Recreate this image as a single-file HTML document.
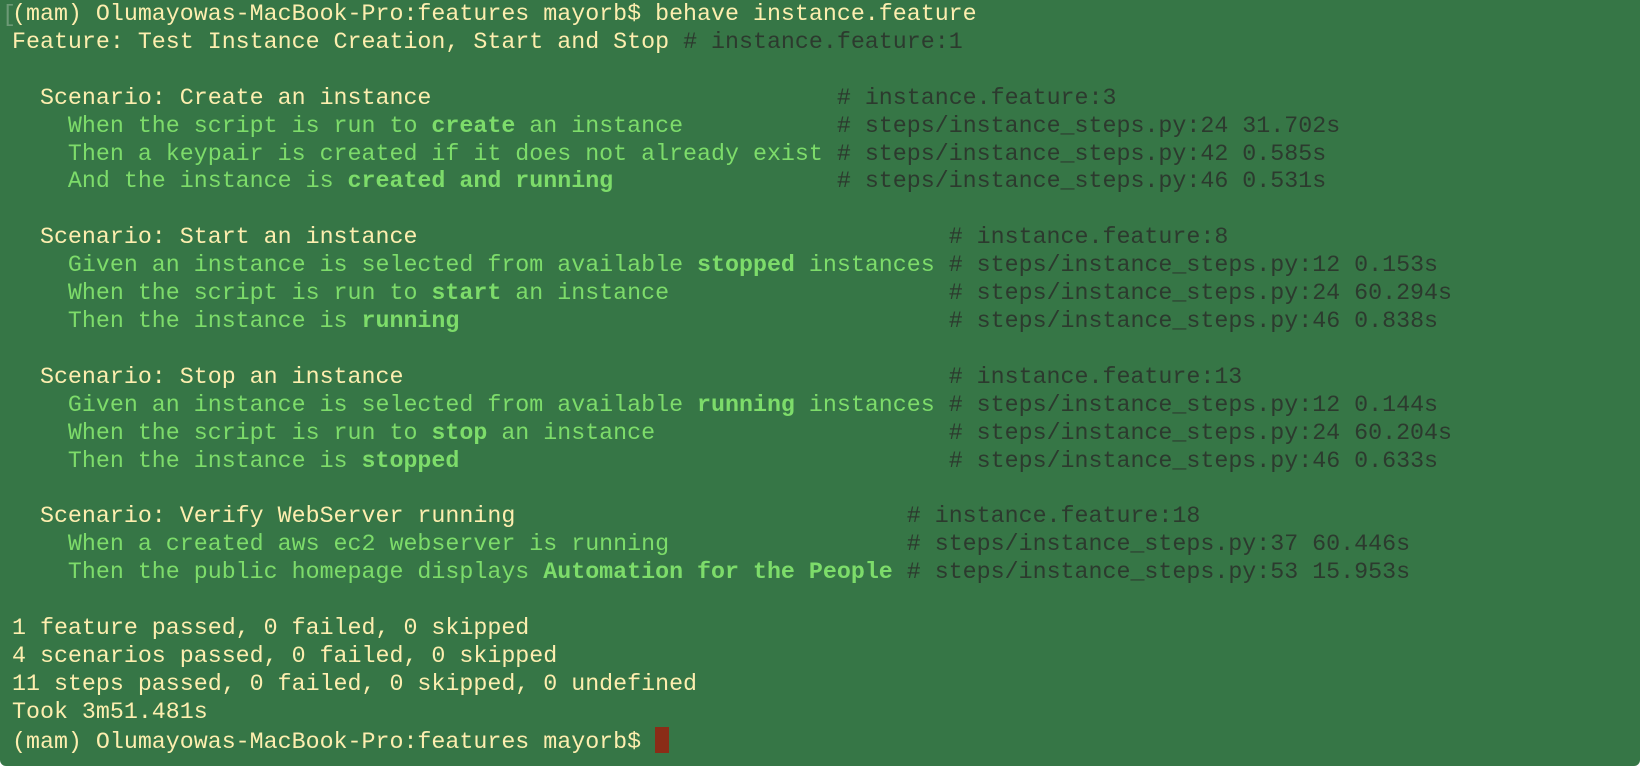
<!DOCTYPE html>
<html><head><meta charset="utf-8"><style>
html,body{margin:0;padding:0;background:#fff;}
.t{position:relative;width:1640px;height:766px;background:#367646;overflow:hidden;border-radius:0 0 6px 6px;}
pre{position:absolute;left:12px;top:1px;margin:0;font-family:"Liberation Mono",monospace;font-size:23.3px;line-height:27.9px;color:#fdeeaf;white-space:pre;}
.g{color:#7ddc6a}
.b{font-weight:bold}
.c{color:#2c3a2e}
.cur{display:inline-block;width:14px;height:26px;background:#8a2c17;vertical-align:-5px;}
.br{position:absolute;left:2px;top:2px;font-family:"Liberation Mono",monospace;font-size:23.3px;line-height:27.9px;color:#6d9a76;}
</style></head><body><div class="t">
<div class="br">[</div>
<pre>(mam) Olumayowas-MacBook-Pro:features mayorb$ behave instance.feature
Feature: Test Instance Creation, Start and Stop <span class="c"># instance.feature:1</span>

  Scenario: Create an instance                             <span class="c"># instance.feature:3</span>
<span class="g">    When the script is run to <span class="b">create</span> an instance           </span><span class="c"># steps/instance_steps.py:24 31.702s</span>
<span class="g">    Then a keypair is created if it does not already exist </span><span class="c"># steps/instance_steps.py:42 0.585s</span>
<span class="g">    And the instance is <span class="b">created and running</span>                </span><span class="c"># steps/instance_steps.py:46 0.531s</span>

  Scenario: Start an instance                                      <span class="c"># instance.feature:8</span>
<span class="g">    Given an instance is selected from available <span class="b">stopped</span> instances </span><span class="c"># steps/instance_steps.py:12 0.153s</span>
<span class="g">    When the script is run to <span class="b">start</span> an instance                    </span><span class="c"># steps/instance_steps.py:24 60.294s</span>
<span class="g">    Then the instance is <span class="b">running</span>                                   </span><span class="c"># steps/instance_steps.py:46 0.838s</span>

  Scenario: Stop an instance                                       <span class="c"># instance.feature:13</span>
<span class="g">    Given an instance is selected from available <span class="b">running</span> instances </span><span class="c"># steps/instance_steps.py:12 0.144s</span>
<span class="g">    When the script is run to <span class="b">stop</span> an instance                     </span><span class="c"># steps/instance_steps.py:24 60.204s</span>
<span class="g">    Then the instance is <span class="b">stopped</span>                                   </span><span class="c"># steps/instance_steps.py:46 0.633s</span>

  Scenario: Verify WebServer running                            <span class="c"># instance.feature:18</span>
<span class="g">    When a created aws ec2 webserver is running                 </span><span class="c"># steps/instance_steps.py:37 60.446s</span>
<span class="g">    Then the public homepage displays <span class="b">Automation for the People</span> </span><span class="c"># steps/instance_steps.py:53 15.953s</span>

1 feature passed, 0 failed, 0 skipped
4 scenarios passed, 0 failed, 0 skipped
11 steps passed, 0 failed, 0 skipped, 0 undefined
Took 3m51.481s
(mam) Olumayowas-MacBook-Pro:features mayorb$ <span class="cur"></span></pre>
</div></body></html>
